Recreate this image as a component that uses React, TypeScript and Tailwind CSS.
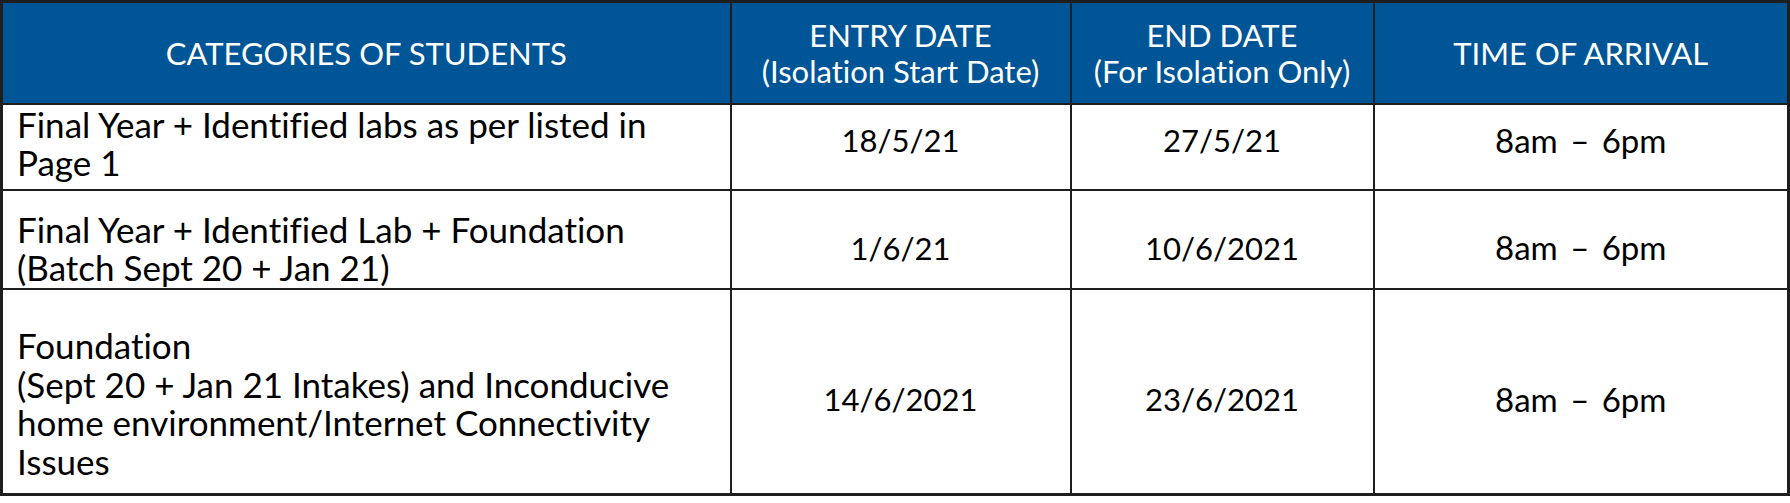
import React from "react";

const rows = [
  {
    cat: ["Final Year + Identified labs as per listed in", "Page 1"],
    entry: "18/5/21",
    end: "27/5/21",
    time: "8am – 6pm",
    h: "h-[86px]",
    catPad: "align-top pt-0",
    pad: "align-middle pb-[12px]",
  },
  {
    cat: ["Final Year + Identified Lab + Foundation", "(Batch Sept 20 + Jan 21)"],
    entry: "1/6/21",
    end: "10/6/2021",
    time: "8am – 6pm",
    h: "h-[99px]",
    catPad: "align-middle pt-[18px]",
    pad: "align-middle pt-[18px]",
  },
  {
    cat: [
      "Foundation",
      "(Sept 20 + Jan 21 Intakes) and Inconducive",
      "home environment/Internet Connectivity",
      "Issues",
    ],
    entry: "14/6/2021",
    end: "23/6/2021",
    time: "8am – 6pm",
    h: "h-[206px]",
    catPad: "align-middle pt-[24px]",
    pad: "align-middle pt-[16px]",
  },
];

export default function App() {
  return (
    <div className="w-[1790px] h-[503px] bg-white font-['Lato','Open_Sans',sans-serif] font-normal text-black [font-variant-ligatures:none]">
      <table className="w-[1790px] border-collapse border-[3px] border-[#1e1e1e] table-fixed">
        <colgroup>
          <col className="w-[729px]" />
          <col className="w-[340px]" />
          <col className="w-[303px]" />
          <col />
        </colgroup>
        <thead>
          <tr className="bg-[#005596] text-white h-[102px]">
            <th className="border-2 border-[#1e1e1e] font-normal text-[31px] leading-[36px] text-center">
              CATEGORIES OF STUDENTS
            </th>
            <th className="border-2 border-[#1e1e1e] font-normal text-[31px] leading-[36px] text-center">
              ENTRY DATE
              <br />
              (Isolation Start Date)
            </th>
            <th className="border-2 border-[#1e1e1e] font-normal text-[31px] leading-[36px] text-center">
              END DATE
              <br />
              (For Isolation Only)
            </th>
            <th className="border-2 border-[#1e1e1e] font-normal text-[31px] leading-[36px] text-center">
              TIME OF ARRIVAL
            </th>
          </tr>
        </thead>
        <tbody>
          {rows.map((r, i) => (
            <tr key={i} className={r.h}>
              <td className={`border-2 border-[#1e1e1e] pl-[14px] pr-2 text-[35px] leading-[38.5px] ${r.catPad}`}>
                {r.cat.map((l, j) => (
                  <div key={j}>{l}</div>
                ))}
              </td>
              <td className={`border-2 border-[#1e1e1e] text-center text-[31px] ${r.pad}`}>
                {r.entry}
              </td>
              <td className={`border-2 border-[#1e1e1e] text-center text-[31px] ${r.pad}`}>
                {r.end}
              </td>
              <td className={`border-2 border-[#1e1e1e] text-center text-[33px] [word-spacing:4px] ${r.pad}`}>
                {r.time}
              </td>
            </tr>
          ))}
        </tbody>
      </table>
    </div>
  );
}
